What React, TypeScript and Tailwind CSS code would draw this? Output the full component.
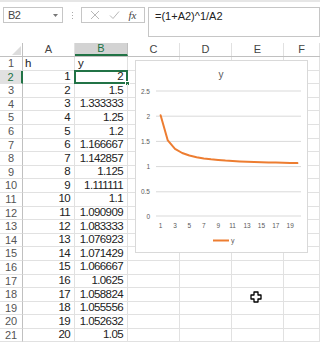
import React from "react";

const colW = [52, 53, 52, 52, 52, 36];
const colNames = ["A", "B", "C", "D", "E", "F"];
const bVals = [
  "2", "1.5", "1.333333", "1.25", "1.2", "1.166667", "1.142857", "1.125", "1.111111", "1.1",
  "1.090909", "1.083333", "1.076923", "1.071429", "1.066667", "1.0625", "1.058824", "1.055556", "1.052632", "1.05",
];
const nums = [2, 1.5, 1.333333, 1.25, 1.2, 1.166667, 1.142857, 1.125, 1.111111, 1.1, 1.090909, 1.083333, 1.076923, 1.071429, 1.066667, 1.0625, 1.058824, 1.055556, 1.052632, 1.05];

function Chart() {
  const pts = nums.map((v, i) => `${(24.6 + i * 7.2).toFixed(1)},${(155 - v * 50.4).toFixed(1)}`).join(" ");
  const grid = [
    { v: "2.5", y: 30 },
    { v: "2", y: 55.2 },
    { v: "1.5", y: 80.4 },
    { v: "1", y: 105.6 },
    { v: "0.5", y: 130.8 },
    { v: "0", y: 155 },
  ];
  const xl = [1, 3, 5, 7, 9, 11, 13, 15, 17, 19];
  return (
    <div className="absolute left-[135px] top-[60px] w-[173px] h-[193px] border border-[#d9d9d9] bg-white">
      <svg width="171" height="191" viewBox="0 0 171 191" style={{ fontFamily: "'Liberation Sans', Arial, sans-serif" }}>
        <text x="85" y="17" fontSize="10" fill="#595959" textAnchor="middle">y</text>
        {grid.map((g) => (
          <g key={g.v}>
            <line x1="20" x2="165" y1={g.y} y2={g.y} stroke="#d9d9d9" strokeWidth="1" />
            <text x="14" y={g.y + 2.5} fontSize="6.5" fill="#595959" textAnchor="end">{g.v}</text>
          </g>
        ))}
        {xl.map((n) => (
          <text key={n} x={24.6 + (n - 1) * 7.2} y={167} fontSize="6.5" fill="#595959" textAnchor="middle">{n}</text>
        ))}
        <polyline points={pts} fill="none" stroke="#ED7D31" strokeWidth="2" strokeLinejoin="round" strokeLinecap="round" />
        <line x1="77" x2="93" y1="179.5" y2="179.5" stroke="#ED7D31" strokeWidth="2" />
        <text x="95" y="182" fontSize="7" fill="#595959">y</text>
      </svg>
    </div>
  );
}

export default function App() {
  return (
    <div
      className="relative w-[320px] h-[342px] overflow-hidden bg-white text-[#222]"
      style={{ fontFamily: "'Liberation Sans', Arial, sans-serif" }}
    >
      {/* formula bar */}
      <div className="h-[43px] border-t-2 border-[#e6e6e6] flex items-start pt-[5px]">
        <div className="ml-[3px] w-[60px] h-[16px] border border-[#c6c6c6] flex items-center justify-between pl-[4px] pr-[4px]">
          <span className="text-[11px] text-[#444] tracking-[-0.5px]">B2</span>
          <svg width="5" height="3" viewBox="0 0 5 3"><path d="M0 0h5L2.5 3z" fill="#777" /></svg>
        </div>
        <div className="w-[18px] h-[16px] flex flex-col items-center justify-center gap-[2px]">
          <div className="w-[1px] h-[1px] bg-[#aaa]" />
          <div className="w-[1px] h-[1px] bg-[#aaa]" />
          <div className="w-[1px] h-[1px] bg-[#aaa]" />
        </div>
        <div className="w-[64px] h-[16px] border border-[#c6c6c6] flex items-center justify-around px-[3px]">
          <svg width="10" height="10" viewBox="0 0 10 10"><path d="M1 1L9 9M9 1L1 9" stroke="#b8b8b8" strokeWidth="1" /></svg>
          <svg width="11" height="10" viewBox="0 0 11 10"><path d="M1 5.5L4 8.5L10 1.5" stroke="#b8b8b8" strokeWidth="1" fill="none" /></svg>
          <span className="text-[11px] italic text-[#444]" style={{ fontFamily: "'Liberation Serif', serif" }}>fx</span>
        </div>
        <div className="ml-[3px] flex-1 h-[30px] border border-[#c6c6c6] pl-[6px] pt-[1px] text-[11px] text-[#222] leading-[14px]">
          =(1+A2)^1/A2
        </div>
      </div>

      {/* header row */}
      <div className="flex h-[14px] border-b border-[#c0c0c0]">
        <div className="w-[23px] h-full border-r border-[#c0c0c0] flex items-end justify-end pr-[1px] pb-[1px]">
          <svg width="9" height="9" viewBox="0 0 9 9"><path d="M9 0V9H0z" fill="#dcdcdc" /></svg>
        </div>
        {colNames.map((c, i) => (
          <div
            key={c}
            style={{ width: colW[i] }}
            className={
              "h-full flex items-center justify-center text-[11px] border-r " +
              (c === "B"
                ? "bg-[#d3d3d3] text-[#217346] border-[#bfbfbf] border-b-2 border-b-[#217346]"
                : "text-[#444] border-[#e1e1e1]")
            }
          >
            {c}
          </div>
        ))}
      </div>

      {/* data rows */}
      {Array.from({ length: 21 }).map((_, r) => {
        const rowNo = r + 1;
        const a = r === 0 ? "h" : String(r);
        const b = r === 0 ? "y" : bVals[r - 1];
        const sel = rowNo === 2;
        return (
          <div key={r} className="flex h-[13.6px]">
            <div
              className={
                "w-[23px] h-full flex items-center justify-center text-[11px] border-b border-[#e1e1e1] " +
                (sel ? "bg-[#e1e1e1] text-[#217346] border-r-2 border-r-[#217346]" : "text-[#555] border-r border-r-[#c0c0c0]")
              }
            >
              {rowNo}
            </div>
            <div
              style={{ width: colW[0] }}
              className={
                "h-full border-r border-b border-[#e1e1e1] flex items-center text-[11.5px] tracking-[-0.6px] leading-none " +
                (r === 0 ? "justify-start pl-[2px]" : "justify-end pr-[4px]")
              }
            >
              {a}
            </div>
            <div
              style={{ width: colW[1] }}
              className={
                "relative h-full border-r border-b border-[#e1e1e1] flex items-center text-[11.5px] tracking-[-0.6px] leading-none " +
                (r === 0 ? "justify-start pl-[3px]" : "justify-end pr-[4px]")
              }
            >
              {b}
              {sel && (
                <div className="absolute left-[-1px] top-[-1px] right-[-1px] bottom-[-1px] border-2 border-[#217346]">
                  <div className="absolute right-[-4px] bottom-[-4px] w-[5px] h-[5px] bg-[#217346] border border-white" />
                </div>
              )}
            </div>
            {colW.slice(2).map((w, i) => (
              <div key={i} style={{ width: w }} className="h-full border-r border-b border-[#e1e1e1]" />
            ))}
          </div>
        );
      })}

      <Chart />

      {/* cursor */}
      <svg className="absolute left-[250px] top-[291px]" width="12" height="12" viewBox="0 0 12 12">
        <path d="M4 1H8V4H11V8H8V11H4V8H1V4H4Z" fill="#fff" stroke="#000" strokeWidth="1.3" strokeLinejoin="round" />
      </svg>
    </div>
  );
}
